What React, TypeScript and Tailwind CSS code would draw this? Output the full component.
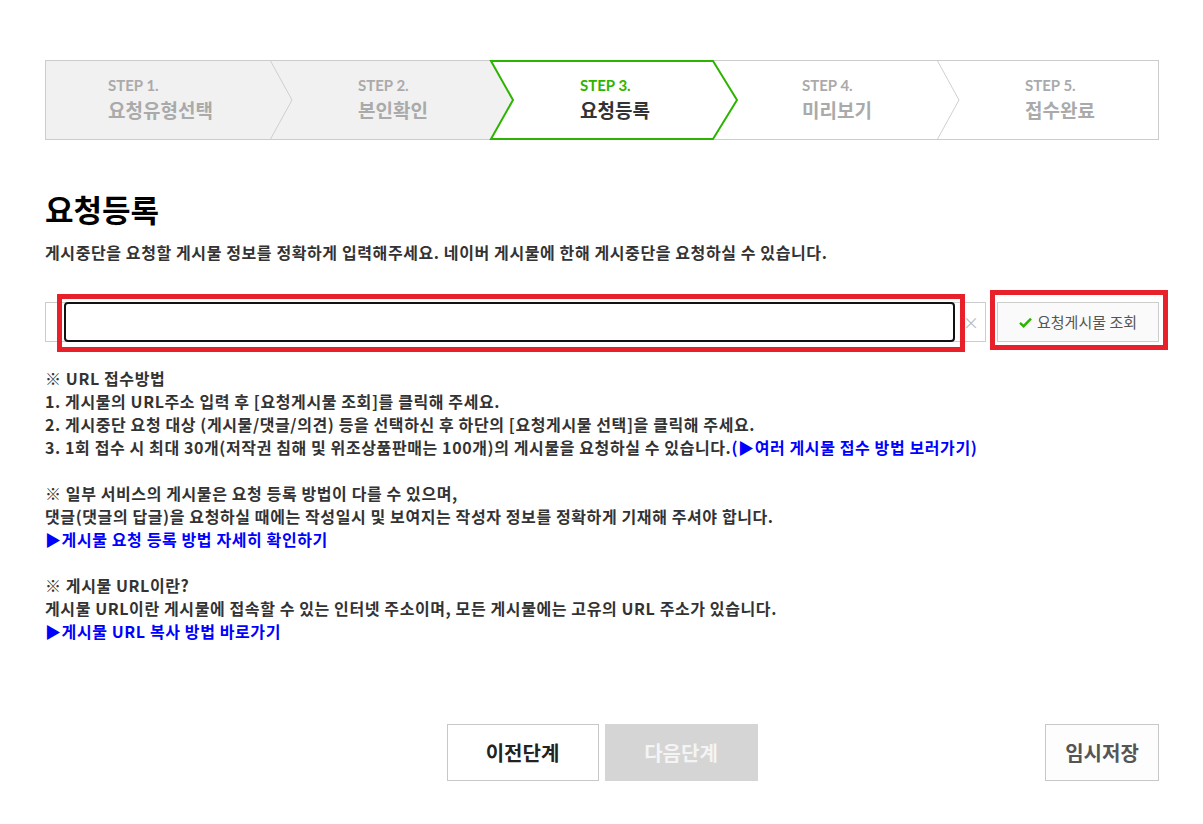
import React from "react";

const KR = { fontFamily: "'Noto Sans CJK KR', 'Noto Sans', sans-serif" };
const STEPF = { fontFamily: "Lato, 'Noto Sans CJK KR', sans-serif" };

type Step = { n: number; label: string; w: string; pl: string; bg: string; active?: boolean };

const steps: Step[] = [
  { n: 1, label: "요청유형선택", w: "w-[224px]", pl: "pl-[62px]", bg: "bg-[#f1f1f1]" },
  { n: 2, label: "본인확인", w: "w-[221px]", pl: "pl-[88px]", bg: "bg-[#f1f1f1]" },
  { n: 3, label: "요청등록", w: "w-[222px]", pl: "pl-[89px]", bg: "bg-white", active: true },
  { n: 4, label: "미리보기", w: "w-[224px]", pl: "pl-[89px]", bg: "bg-white" },
  { n: 5, label: "접수완료", w: "flex-1", pl: "pl-[88px]", bg: "bg-white" },
];

function StepBar() {
  return (
    <div className="relative w-[1114px] h-[80px] border border-[#cccccc] flex">
      {steps.map((s) => (
        <div key={s.n} className={`${s.w} ${s.bg} ${s.pl} h-full flex flex-col pt-[15px]`}>
          <span
            className={`relative z-10 text-[15px] leading-[18px] font-bold ${s.active ? "text-[#2db400]" : "text-[#aaaaaa]"}`}
            style={STEPF}
          >
            STEP {s.n}.
          </span>
          <span
            className={`relative z-10 mt-[3px] text-[19px] leading-[28px] font-bold ${s.active ? "text-[#333333]" : "text-[#aaaaaa]"}`}
            style={STEPF}
          >
            {s.label}
          </span>
        </div>
      ))}
      <svg
        className="absolute -top-px -left-px pointer-events-none"
        width="1114"
        height="80"
        viewBox="0 0 1114 80"
      >
        <polyline points="225,0 247,40 225,80" fill="none" stroke="#cfcfcf" strokeWidth="1" />
        <polyline points="892,0 914,40 892,80" fill="none" stroke="#cfcfcf" strokeWidth="1" />
        <polygon points="446,1 468,40 446,79" fill="#f1f1f1" />
        <polygon
          points="446,1 468,40 446,79 668,79 692,40 668,1"
          fill="#ffffff"
          stroke="#2db400"
          strokeWidth="2"
          strokeLinejoin="miter"
        />
      </svg>
    </div>
  );
}

function Check() {
  return (
    <svg width="13" height="11" viewBox="0 0 13 11">
      <path d="M1 5.8 L4.6 9.2 L12 1.6" fill="none" stroke="#2db400" strokeWidth="2.4" />
    </svg>
  );
}

const base = "text-[16px] leading-[23px] font-bold tracking-[0.6px]";
const line = `${base} text-[#333333]`;
const linkLine = `${base} text-[#0000ff]`;

export default function App() {
  return (
    <div className="w-[1203px] h-[824px] bg-white pt-[60px] pl-[45px]" style={KR}>
      <StepBar />

      <h1 className="mt-[49px] text-[31px] leading-[40px] font-bold text-black">요청등록</h1>
      <p className="mt-[13px] text-[16px] leading-[20px] font-bold text-[#333333] tracking-[0.6px]">
        게시중단을 요청할 게시물 정보를 정확하게 입력해주세요. 네이버 게시물에 한해 게시중단을 요청하실 수 있습니다.
      </p>

      <div className="mt-[40px] flex items-center gap-[11px] w-[1114px]">
        <div className="relative w-[941px] h-[40px] border border-[#cccccc] flex items-center">
          <div className="ml-[18px] w-[891px] h-[40px] -my-px border-2 border-[#111111] rounded-[4px] bg-white" />
          <span className="ml-[8px] text-[#bbbbbb] text-[16px] leading-none">×</span>
          <div className="absolute left-[11px] -top-[9px] w-[908px] h-[58px] border-[5px] border-[#e8202a] pointer-events-none" />
        </div>
        <div className="relative">
          <button className="w-[162px] h-[40px] border border-[#cccccc] bg-[#fafafa] flex items-center justify-center gap-[5px] text-[15px] text-[#555555]">
            <Check />
            <span>요청게시물 조회</span>
          </button>
          <div className="absolute -left-[7px] -top-[12px] w-[178px] h-[60px] border-[5px] border-[#e8202a] pointer-events-none" />
        </div>
      </div>

      <div className="mt-[25px]">
        <p className={line}>※ URL 접수방법</p>
        <p className={line}>1. 게시물의 URL주소 입력 후 [요청게시물 조회]를 클릭해 주세요.</p>
        <p className={line}>2. 게시중단 요청 대상 (게시물/댓글/의견) 등을 선택하신 후 하단의 [요청게시물 선택]을 클릭해 주세요.</p>
        <p className={line}>
          3. 1회 접수 시 최대 30개(저작권 침해 및 위조상품판매는 100개)의 게시물을 요청하실 수 있습니다.
          <span className="text-[#0000ff]">(▶여러 게시물 접수 방법 보러가기)</span>
        </p>
        <p className={`${line} h-[23px]`}></p>
        <p className={line}>※ 일부 서비스의 게시물은 요청 등록 방법이 다를 수 있으며,</p>
        <p className={line}>댓글(댓글의 답글)을 요청하실 때에는 작성일시 및 보여지는 작성자 정보를 정확하게 기재해 주셔야 합니다.</p>
        <p className={linkLine}>▶게시물 요청 등록 방법 자세히 확인하기</p>
        <p className={`${line} h-[23px]`}></p>
        <p className={line}>※ 게시물 URL이란?</p>
        <p className={line}>게시물 URL이란 게시물에 접속할 수 있는 인터넷 주소이며, 모든 게시물에는 고유의 URL 주소가 있습니다.</p>
        <p className={linkLine}>▶게시물 URL 복사 방법 바로가기</p>
      </div>

      <div className="mt-[81px] w-[1114px] grid grid-cols-[1fr_auto_1fr]">
        <div />
        <div className="flex gap-[6px]">
          <button className="w-[152px] h-[57px] border border-[#c8c8c8] bg-white text-[20px] font-bold text-[#222222]">
            이전단계
          </button>
          <button className="w-[153px] h-[57px] bg-[#d5d5d5] text-[20px] font-bold text-[#f4f4f4]">
            다음단계
          </button>
        </div>
        <div className="flex justify-end">
          <button className="w-[114px] h-[57px] border border-[#c8c8c8] bg-[#fdfdfd] text-[20px] font-bold text-[#555555]">
            임시저장
          </button>
        </div>
      </div>
    </div>
  );
}
